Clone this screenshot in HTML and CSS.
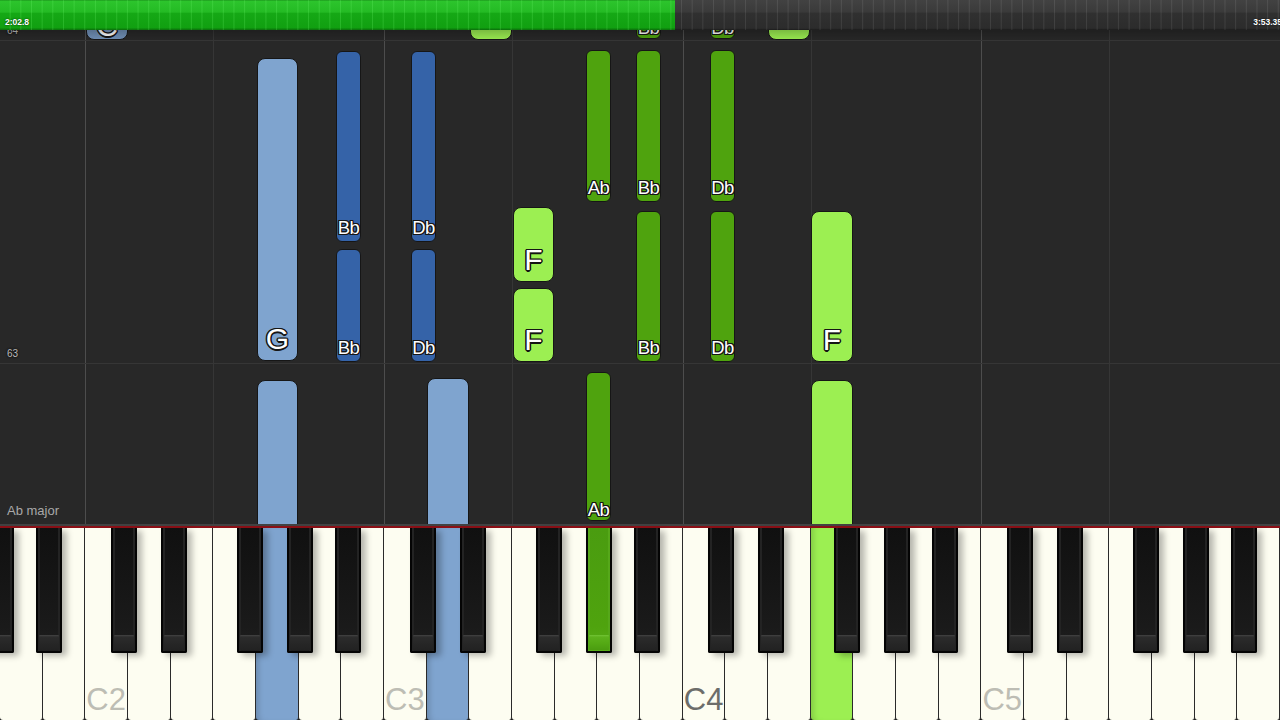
FILE: index.html
```html
<!DOCTYPE html>
<html lang="en">
<head>
<meta charset="utf-8">
<title>Piano roll</title>
<link rel="stylesheet" href="styles.css">
</head>
<body>
<div class="app">
  <div class="timeline">
    <div class="timeline-fill" style="width:675px"></div>
    <span class="time">2:02.8</span>
    <span class="time time-end">3:53.35</span>
  </div>

  <div class="roll">
    <div class="vline major" style="left:85px"></div>
    <div class="vline" style="left:213px"></div>
    <div class="vline major" style="left:384px"></div>
    <div class="vline" style="left:512px"></div>
    <div class="vline major" style="left:683px"></div>
    <div class="vline" style="left:811px"></div>
    <div class="vline major" style="left:981px"></div>
    <div class="vline" style="left:1109px"></div>
    <div class="hline" style="top:10px"></div>
    <div class="hline" style="top:333px"></div>
    <span class="measure" style="top:-4px">64</span>
    <span class="measure" style="top:319px">63</span>

    <!-- left hand -->
    <div class="note wide lb dim" style="left:86px;top:-30px;width:42px;height:40px"><span class="lbl big low">C</span></div>
    <div class="note wide lb" style="left:257px;top:28px;width:41px;height:303px"><span class="lbl big">G</span></div>
    <div class="note wide lb" style="left:257px;top:350px;width:41px;height:160px"></div>
    <div class="note wide lb" style="left:427px;top:348px;width:42px;height:160px"></div>
    <div class="note narrow db" style="left:336px;top:21px;width:25px;height:191px"><span class="lbl">Bb</span></div>
    <div class="note narrow db" style="left:336px;top:219px;width:25px;height:113px"><span class="lbl">Bb</span></div>
    <div class="note narrow db" style="left:411px;top:21px;width:25px;height:191px"><span class="lbl">Db</span></div>
    <div class="note narrow db" style="left:411px;top:219px;width:25px;height:113px"><span class="lbl">Db</span></div>

    <!-- right hand -->
    <div class="note wide lg" style="left:470px;top:-40px;width:42px;height:50px"></div>
    <div class="note wide lg" style="left:768px;top:-40px;width:42px;height:50px"></div>
    <div class="note wide lg" style="left:513px;top:177px;width:41px;height:75px"><span class="lbl big">F</span></div>
    <div class="note wide lg" style="left:513px;top:258px;width:41px;height:74px"><span class="lbl big">F</span></div>
    <div class="note wide lg" style="left:811px;top:181px;width:42px;height:151px"><span class="lbl big">F</span></div>
    <div class="note wide lg" style="left:811px;top:350px;width:42px;height:160px"></div>
    <div class="note narrow dg" style="left:636px;top:-40px;width:25px;height:49px"><span class="lbl lower">Bb</span></div>
    <div class="note narrow dg" style="left:710px;top:-40px;width:25px;height:49px"><span class="lbl lower">Db</span></div>
    <div class="note narrow dg" style="left:586px;top:20px;width:25px;height:152px"><span class="lbl">Ab</span></div>
    <div class="note narrow dg" style="left:636px;top:20px;width:25px;height:152px"><span class="lbl">Bb</span></div>
    <div class="note narrow dg" style="left:710px;top:20px;width:25px;height:152px"><span class="lbl">Db</span></div>
    <div class="note narrow dg" style="left:636px;top:181px;width:25px;height:151px"><span class="lbl">Bb</span></div>
    <div class="note narrow dg" style="left:710px;top:181px;width:25px;height:151px"><span class="lbl">Db</span></div>
    <div class="note narrow dg" style="left:586px;top:342px;width:25px;height:149px"><span class="lbl lower">Ab</span></div>

    <span class="key-sig">Ab major</span>
  </div>

  <div class="keyboard">
    <div class="whites">
      <div class="wk"></div><div class="wk"></div>
      <div class="wk"><span class="oct">C2</span></div><div class="wk"></div><div class="wk"></div><div class="wk"></div><div class="wk on-lb"></div><div class="wk"></div><div class="wk"></div>
      <div class="wk"><span class="oct">C3</span></div><div class="wk on-lb"></div><div class="wk"></div><div class="wk"></div><div class="wk"></div><div class="wk"></div><div class="wk"></div>
      <div class="wk"><span class="oct oct-mid">C4</span></div><div class="wk"></div><div class="wk"></div><div class="wk on-lg"></div><div class="wk"></div><div class="wk"></div><div class="wk"></div>
      <div class="wk"><span class="oct">C5</span></div><div class="wk"></div><div class="wk"></div><div class="wk"></div><div class="wk"></div><div class="wk"></div><div class="wk"></div>
    </div>
    <div class="bk" style="left:-11.8px"></div>
    <div class="bk" style="left:36.2px"></div>
    <div class="bk" style="left:110.8px"></div>
    <div class="bk" style="left:160.8px"></div>
    <div class="bk" style="left:236.8px"></div>
    <div class="bk" style="left:286.8px"></div>
    <div class="bk" style="left:334.8px"></div>
    <div class="bk" style="left:409.5px"></div>
    <div class="bk" style="left:459.5px"></div>
    <div class="bk" style="left:535.5px"></div>
    <div class="bk on-dg" style="left:585.5px"></div>
    <div class="bk" style="left:633.5px"></div>
    <div class="bk" style="left:708.2px"></div>
    <div class="bk" style="left:758.2px"></div>
    <div class="bk" style="left:834.2px"></div>
    <div class="bk" style="left:884.2px"></div>
    <div class="bk" style="left:932.2px"></div>
    <div class="bk" style="left:1006.8px"></div>
    <div class="bk" style="left:1056.8px"></div>
    <div class="bk" style="left:1132.8px"></div>
    <div class="bk" style="left:1182.8px"></div>
    <div class="bk" style="left:1230.8px"></div>
  </div>
</div>
</body>
</html>
```

FILE: styles.css
```css
* { box-sizing: border-box; }

html, body {
  margin: 0;
  padding: 0;
  background: #282828;
}

.app {
  width: 1280px;
  height: 720px;
  overflow: hidden;
  display: flex;
  flex-direction: column;
  font-family: "Liberation Sans", Arial, sans-serif;
}

/* ---------- timeline ---------- */
.timeline {
  position: relative;
  height: 30px;
  flex: none;
  display: flex;
  justify-content: space-between;
  align-items: flex-end;
  padding: 0 0 3px 5px;
  background:
    repeating-linear-gradient(90deg, transparent 0 10px, rgba(255,255,255,0.09) 10px 11px),
    linear-gradient(#424242 0, #3a3a3a 40%, #303030 44%, #2c2c2c 94%, #1b1b1b 100%);
  background-size: 10.667px 100%, 100% 100%;
  z-index: 3;
}

.timeline-fill {
  position: absolute;
  left: 0;
  top: 0;
  bottom: 0;
  background:
    repeating-linear-gradient(90deg, transparent 0 10px, rgba(120,255,120,0.22) 10px 11px),
    linear-gradient(#1e9a1e 0, #2cc42c 5%, #24bb24 40%, #15a815 45%, #11a011 92%, #0b6e0b 100%);
  background-size: 10.667px 100%, 100% 100%;
}

.time {
  position: relative;
  color: #fff;
  font-size: 8.5px;
  font-weight: bold;
  line-height: 9px;
  text-shadow: 0 0 2px rgba(0,0,0,0.8);
}

.time-end { margin-right: -2px; }

/* ---------- note roll ---------- */
.roll {
  position: relative;
  height: 494px;
  flex: none;
  background: #282828;
  overflow: hidden;
}

.roll::before {
  content: "";
  position: absolute;
  left: 0;
  right: 0;
  top: 0;
  height: 12px;
  background: linear-gradient(rgba(0,0,0,0.22), rgba(0,0,0,0));
  z-index: 2;
}

.vline {
  position: absolute;
  top: 0;
  bottom: 0;
  width: 1px;
  background: #363636;
}

.vline.major { background: #4d4d4d; }

.hline {
  position: absolute;
  left: 0;
  right: 0;
  height: 1px;
  background: #363636;
}

.measure {
  position: absolute;
  left: 7px;
  font-size: 10px;
  line-height: 10px;
  color: #b9b9b9;
  text-shadow: 0 0 2px #111, 0 0 2px #111;
}

.key-sig {
  position: absolute;
  left: 7px;
  bottom: 7px;
  font-size: 13px;
  line-height: 13px;
  color: #a9a9a9;
}

.note {
  position: absolute;
  display: flex;
  flex-direction: column;
  justify-content: flex-end;
  align-items: center;
  border: 1px solid #161616;
}

.note.wide { border-radius: 8px; padding-bottom: 6px; }
.note.narrow { border-radius: 6px; padding-bottom: 4px; }

.lb { background: #7fa4cf; }
.lb.dim { background: #7191b8; }
.db { background: #3563a8; }
.lg { background: #9cef52; }
.dg { background: #4fa30e; }

.lbl {
  color: #fff;
  font-size: 18.5px;
  line-height: 18px;
  letter-spacing: -0.5px;
  text-shadow:
    1px 0 0 #151515, -1px 0 0 #151515, 0 1px 0 #151515, 0 -1px 0 #151515,
    1px 1px 0 #151515, -1px -1px 0 #151515, 1px -1px 0 #151515, -1px 1px 0 #151515;
}

.lbl.big {
  font-size: 30px;
  line-height: 30px;
  letter-spacing: 0;
  text-shadow:
    1.5px 0 0 #151515, -1.5px 0 0 #151515, 0 1.5px 0 #151515, 0 -1.5px 0 #151515,
    1px 1px 0 #151515, -1px -1px 0 #151515, 1px -1px 0 #151515, -1px 1px 0 #151515;
}

.lbl.low { margin-bottom: -8px; }
.lbl.lower { margin-bottom: -3px; }

/* ---------- keyboard ---------- */
.keyboard {
  position: relative;
  flex: 1;
  border-top: 2px solid #424242;
  background: #1c1c1c;
}

.keyboard::before {
  content: "";
  display: block;
  height: 2px;
  background: #8c0f16;
}

.whites {
  display: flex;
  height: 192px;
}

.wk {
  flex: 1;
  display: flex;
  justify-content: center;
  align-items: flex-end;
  padding-bottom: 5px;
  background: #fdfdf1;
  border-right: 1.5px solid #2a2a2a;
  border-radius: 0 0 3px 3px;
}

.wk.on-lb {
  background: #7fa4cf;
  box-shadow: inset 6px 0 6px -4px rgba(0,0,0,0.18);
}

.wk.on-lg {
  background: #9cef52;
  box-shadow: inset 6px 0 6px -4px rgba(0,0,0,0.18);
}

.oct {
  font-size: 31px;
  line-height: 31px;
  color: #bdbdb4;
}

.oct-mid { color: #6d6d6a; }

.bk {
  position: absolute;
  top: 2px;
  width: 26px;
  height: 125px;
  background: linear-gradient(#101010, #1a1a1a 80%, #1f1f1f 100%);
  border: 2px solid #040404;
  border-top: 0;
  border-radius: 0 0 2px 2px;
  box-shadow:
    inset 2px 0 0 #232323, inset -2px 0 0 #232323,
    5px 3px 6px rgba(0,0,0,0.28);
}

.bk::after {
  content: "";
  position: absolute;
  left: 1px;
  right: 1px;
  bottom: 1px;
  height: 15px;
  border-radius: 1px;
  background: linear-gradient(#444 0, #2c2c2c 2px, #262626 60%, #222 100%);
}

.bk.on-dg {
  background: linear-gradient(#4a9c10, #4fa30e 80%, #58ad18 100%);
  box-shadow:
    inset 2px 0 0 #56a81a, inset -2px 0 0 #56a81a,
    5px 3px 6px rgba(0,0,0,0.28);
}

.bk.on-dg::after {
  background: linear-gradient(#72c436 0, #5db21c 2px, #53a814 60%, #4b9c10 100%);
}
```
